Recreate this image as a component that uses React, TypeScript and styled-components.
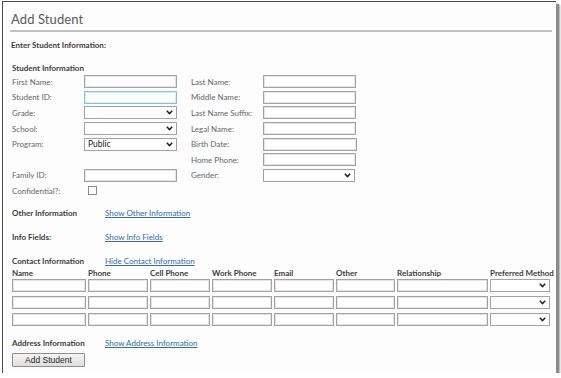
import React from 'react';
import styled, { createGlobalStyle } from 'styled-components';

const GlobalStyle = createGlobalStyle`
  html, body {
    margin: 0;
    padding: 0;
    background: #ffffff;
  }
  body {
    font-family: Lato, "Liberation Sans", sans-serif;
  }
`;

const Window = styled.div`
  box-sizing: border-box;
  margin: 1px 0 0 2px;
  width: 554px;
  height: 372px;
  background: #fdfdfd;
  border-left: 1px solid #4a4a4a;
  border-top: 1px solid #4a4a4a;
  box-shadow: 3px 3px 1px #8a8a8a, 4px 4px 2px #b5b5b5;
  padding: 0 4px 0 8px;
`;

const Title = styled.div`
  font-size: 13px;
  color: #5a5a5a;
  line-height: 16px;
  padding-top: 9px;
  letter-spacing: 0.1px;
`;

const Rule = styled.div`
  height: 2px;
  background: #c2c2c2;
  margin: 3px 0 0 -1px;
`;

const Heading = styled.div<{ $top: number; $indent?: number }>`
  font-size: 8px;
  font-weight: 700;
  color: #3c3c3c;
  line-height: 10px;
  margin-top: ${(p) => p.$top}px;
  padding-left: ${(p) => p.$indent ?? 0}px;
`;

const FormGrid = styled.div`
  display: grid;
  grid-template-columns: 72px 93px 14px 72px 94px;
  grid-auto-rows: 15.6px;
  align-items: center;
  margin: 1px 0 0 1px;
`;

const Label = styled.div`
  font-size: 8px;
  color: #666;
  line-height: 10px;
  white-space: nowrap;
`;

const Spacer = styled.div``;

const Input = styled.div<{ $w?: number; $focus?: boolean }>`
  box-sizing: border-box;
  height: 13px;
  width: ${(p) => (p.$w ? `${p.$w}px` : '100%')};
  background: #fff;
  border: 1px solid ${(p) => (p.$focus ? '#7ec3ea' : '#a3a3a3')};
  box-shadow: inset 0 0 0 1px ${(p) => (p.$focus ? '#d6eefa' : '#e4e4e4')};
`;

const SelectBox = styled.div<{ $w?: number }>`
  box-sizing: border-box;
  height: 13px;
  width: ${(p) => (p.$w ? `${p.$w}px` : '100%')};
  background: #fff;
  border: 1px solid #a3a3a3;
  display: flex;
  align-items: center;
  justify-content: space-between;
  padding: 0 3px 0 3px;
  font-size: 8.5px;
  color: #222;
`;

const Check = styled.div`
  box-sizing: border-box;
  width: 9px;
  height: 9px;
  margin-left: 4px;
  border: 1px solid #8a8a8a;
  background: #fff;
`;

const SectionRow = styled.div<{ $top: number }>`
  display: flex;
  align-items: center;
  margin-top: ${(p) => p.$top}px;
  padding-left: 1px;
  line-height: 10px;
`;

const SectionTitle = styled.div`
  width: 93px;
  font-size: 8px;
  font-weight: 700;
  color: #3c3c3c;
`;

const Link = styled.a`
  font-size: 8px;
  color: #2f6cb3;
  text-decoration: underline;
  cursor: pointer;
`;

const ContactGrid = styled.div`
  display: grid;
  grid-template-columns: 74px 60px 60px 60px 60px 59px 91px 60px;
  column-gap: 2px;
  grid-template-rows: 11px 17px 17px 13px;
  align-items: start;
  margin: 2px 0 0 1px;
`;

const ColHead = styled.div`
  font-size: 8px;
  font-weight: 700;
  color: #3c3c3c;
  line-height: 10px;
  white-space: nowrap;
`;

const Button = styled.button`
  display: block;
  box-sizing: border-box;
  margin: 5px 0 0 1px;
  width: 73px;
  height: 14px;
  padding: 0;
  border: 1px solid #8e8e8e;
  border-radius: 1px;
  background: linear-gradient(#f4f4f4, #dedede);
  font-family: "Liberation Sans", Arial, sans-serif;
  font-size: 8.5px;
  color: #1e1e1e;
  line-height: 12px;
`;

const Chevron = () => (
  <svg width="7" height="5" viewBox="0 0 7 5">
    <path d="M0.8 0.8 L3.5 3.6 L6.2 0.8" fill="none" stroke="#222" strokeWidth="1.5" />
  </svg>
);

const Select: React.FC<{ value?: string; w?: number }> = ({ value, w }) => (
  <SelectBox $w={w}>
    <span>{value}</span>
    <Chevron />
  </SelectBox>
);

const contactCols = ['Name', 'Phone', 'Cell Phone', 'Work Phone', 'Email', 'Other', 'Relationship', 'Preferred Method'];

export default function App() {
  return (
    <>
      <GlobalStyle />
      <Window>
        <Title>Add Student</Title>
        <Rule />
        <Heading $top={8}>Enter Student Information:</Heading>
        <Heading $top={13} $indent={1}>Student Information</Heading>
        <FormGrid>
          <Label>First Name:</Label>
          <Input />
          <Spacer />
          <Label>Last Name:</Label>
          <Input $w={93} />

          <Label>Student ID:</Label>
          <Input $focus />
          <Spacer />
          <Label>Middle Name:</Label>
          <Input $w={93} />

          <Label>Grade:</Label>
          <Select />
          <Spacer />
          <Label>Last Name Suffix:</Label>
          <Input $w={93} />

          <Label>School:</Label>
          <Select />
          <Spacer />
          <Label>Legal Name:</Label>
          <Input $w={93} />

          <Label>Program:</Label>
          <Select value="Public" />
          <Spacer />
          <Label>Birth Date:</Label>
          <Input $w={94} />

          <Spacer />
          <Spacer />
          <Spacer />
          <Label>Home Phone:</Label>
          <Input $w={93} />

          <Label>Family ID:</Label>
          <Input />
          <Spacer />
          <Label>Gender:</Label>
          <Select w={92} />

          <Label>Confidential?:</Label>
          <Check />
        </FormGrid>

        <SectionRow $top={9}>
          <SectionTitle>Other Information</SectionTitle>
          <Link>Show Other Information</Link>
        </SectionRow>
        <SectionRow $top={14}>
          <SectionTitle>Info Fields:</SectionTitle>
          <Link>Show Info Fields</Link>
        </SectionRow>
        <SectionRow $top={14}>
          <SectionTitle>Contact Information</SectionTitle>
          <Link>Hide Contact Information</Link>
        </SectionRow>

        <ContactGrid>
          {contactCols.map((c) => (
            <ColHead key={c}>{c}</ColHead>
          ))}
          {[0, 1, 2].map((r) =>
            contactCols.map((c) =>
              c === 'Preferred Method' ? <Select key={`${r}-${c}`} /> : <Input key={`${r}-${c}`} />,
            ),
          )}
        </ContactGrid>

        <SectionRow $top={12}>
          <SectionTitle>Address Information</SectionTitle>
          <Link>Show Address Information</Link>
        </SectionRow>
        <Button>Add Student</Button>
      </Window>
    </>
  );
}
